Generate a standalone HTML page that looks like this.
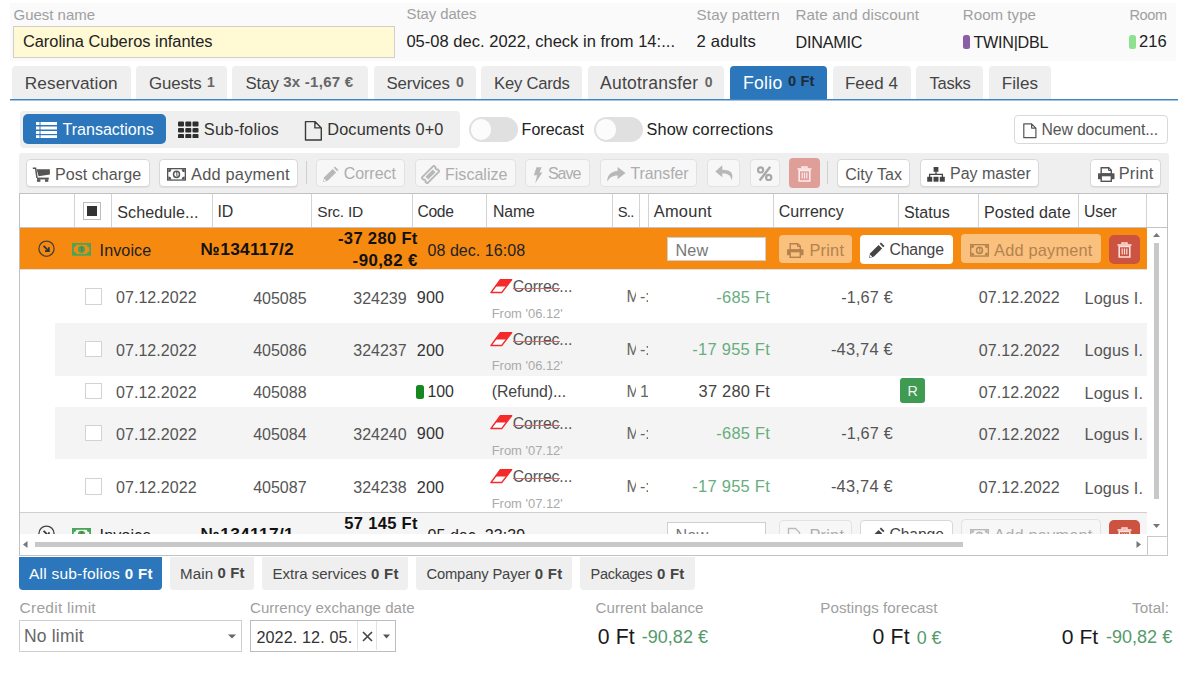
<!DOCTYPE html>
<html><head><meta charset="utf-8"><style>
html,body{margin:0;padding:0;background:#fff;width:1189px;height:673px;overflow:hidden;position:relative;font-family:"Liberation Sans",sans-serif;}
.a{position:absolute;box-sizing:border-box;}
.t{white-space:pre;}
</style></head><body>
<div class="a" style="left:10px;top:3px;width:1166.00px;height:58.00px;background:#fafafa;"></div>
<div class="a t" style="top:4.81px;font-size:14.97px;line-height:19px;color:#a0a0a0;letter-spacing:-0.015px;left:13.60px;">Guest name</div>
<div class="a t" style="top:5.33px;font-size:14.90px;line-height:19px;color:#a0a0a0;letter-spacing:-0.054px;left:406.50px;">Stay dates</div>
<div class="a t" style="top:5.23px;font-size:15.21px;line-height:19px;color:#a0a0a0;letter-spacing:0.102px;left:696.60px;">Stay pattern</div>
<div class="a t" style="top:5.24px;font-size:15.16px;line-height:19px;color:#a0a0a0;letter-spacing:0.081px;left:795.50px;">Rate and discount</div>
<div class="a t" style="top:5.27px;font-size:15.07px;line-height:19px;color:#a0a0a0;letter-spacing:0.042px;left:962.80px;">Room type</div>
<div class="a t" style="top:5.95px;font-size:14.56px;line-height:18px;color:#a0a0a0;letter-spacing:-0.392px;left:1129.50px;">Room</div>
<div class="a" style="left:13px;top:26px;width:381.50px;height:31.70px;background:#fffad4;border:1px solid #cfcfcf;"></div>
<div class="a t" style="top:31.29px;font-size:16.46px;line-height:21px;color:#222;letter-spacing:-0.018px;left:22.90px;">Carolina Cuberos infantes</div>
<div class="a t" style="top:31.47px;font-size:16.53px;line-height:21px;color:#222;letter-spacing:0.014px;left:406.40px;">05-08 dec. 2022, check in from 14:...</div>
<div class="a t" style="top:31.40px;font-size:16.72px;line-height:21px;color:#222;letter-spacing:0.112px;left:696.60px;">2 adults</div>
<div class="a t" style="top:32.09px;font-size:16.16px;line-height:20px;color:#222;letter-spacing:-0.236px;left:795.60px;">DINAMIC</div>
<div class="a" style="left:962.6px;top:34.5px;width:7.40px;height:14.30px;background:#8b5fa8;border-radius:2.5px;"></div>
<div class="a t" style="top:32.11px;font-size:16.13px;line-height:20px;color:#222;letter-spacing:-0.253px;left:973.50px;">TWIN|DBL</div>
<div class="a" style="left:1129px;top:34.5px;width:7.00px;height:14.30px;background:#8fe08f;border-radius:2.5px;"></div>
<div class="a t" style="top:31.47px;font-size:16.51px;line-height:21px;color:#222;letter-spacing:0.011px;left:1139.00px;">216</div>
<div class="a" style="left:12px;top:66px;width:119.00px;height:34.00px;background:#efefef;border-radius:4px 4px 0 0;"></div>
<div class="a t" style="top:72.03px;font-size:17.21px;line-height:22px;color:#444;letter-spacing:0.110px;left:24.80px;">Reservation</div>
<div class="a" style="left:136px;top:66px;width:91.00px;height:34.00px;background:#efefef;border-radius:4px 4px 0 0;"></div>
<div class="a t" style="top:72.66px;font-size:16.84px;line-height:21px;color:#444;letter-spacing:-0.099px;left:148.90px;">Guests</div>
<div class="a t" style="top:72.54px;font-size:14.00px;line-height:18px;color:#666;font-weight:700;left:207.00px;">1</div>
<div class="a" style="left:232px;top:66px;width:136.00px;height:34.00px;background:#efefef;border-radius:4px 4px 0 0;"></div>
<div class="a t" style="top:72.67px;font-size:16.83px;line-height:21px;color:#444;letter-spacing:-0.117px;left:245.50px;">Stay</div>
<div class="a t" style="top:71.69px;font-size:15.02px;line-height:19px;color:#666;font-weight:700;letter-spacing:0.260px;left:283.20px;">3x -1,67 €</div>
<div class="a" style="left:374px;top:66px;width:102.00px;height:34.00px;background:#efefef;border-radius:4px 4px 0 0;"></div>
<div class="a t" style="top:72.68px;font-size:16.78px;line-height:21px;color:#444;letter-spacing:-0.121px;left:386.50px;">Services</div>
<div class="a t" style="top:72.54px;font-size:14.00px;line-height:18px;color:#666;font-weight:700;left:456.00px;">0</div>
<div class="a" style="left:481px;top:66px;width:101.00px;height:34.00px;background:#efefef;border-radius:4px 4px 0 0;"></div>
<div class="a t" style="top:72.73px;font-size:16.64px;line-height:21px;color:#444;letter-spacing:-0.212px;left:494.00px;">Key Cards</div>
<div class="a" style="left:588px;top:66px;width:136.00px;height:34.00px;background:#efefef;border-radius:4px 4px 0 0;"></div>
<div class="a t" style="top:71.93px;font-size:17.50px;line-height:22px;color:#444;letter-spacing:0.247px;left:600.00px;">Autotransfer</div>
<div class="a t" style="top:72.54px;font-size:14.00px;line-height:18px;color:#666;font-weight:700;left:704.70px;">0</div>
<div class="a" style="left:730px;top:66px;width:97.00px;height:34.00px;background:#2c77bb;border-radius:4px 4px 0 0;"></div>
<div class="a t" style="top:71.90px;font-size:17.58px;line-height:22px;color:#fff;letter-spacing:0.314px;left:742.90px;">Folio</div>
<div class="a t" style="top:72.31px;font-size:14.67px;line-height:18px;color:#1d2b3a;font-weight:700;letter-spacing:0.098px;left:788.00px;">0 Ft</div>
<div class="a" style="left:833px;top:66px;width:78.00px;height:34.00px;background:#efefef;border-radius:4px 4px 0 0;"></div>
<div class="a t" style="top:72.61px;font-size:16.99px;line-height:21px;color:#444;left:845.00px;">Feed 4</div>
<div class="a" style="left:916px;top:66px;width:67.00px;height:34.00px;background:#efefef;border-radius:4px 4px 0 0;"></div>
<div class="a t" style="top:72.76px;font-size:16.56px;line-height:21px;color:#444;letter-spacing:-0.279px;left:929.60px;">Tasks</div>
<div class="a" style="left:989px;top:66px;width:62.00px;height:34.00px;background:#efefef;border-radius:4px 4px 0 0;"></div>
<div class="a t" style="top:72.57px;font-size:17.10px;line-height:21px;color:#444;letter-spacing:0.054px;left:1001.70px;">Files</div>
<div class="a" style="left:10px;top:99px;width:1167.50px;height:1.00px;background:#3f84c3;"></div>
<div class="a" style="left:10px;top:100px;width:1167.50px;height:1.00px;background:#a4c4e4;"></div>
<div class="a" style="left:20px;top:110.5px;width:440.00px;height:37.00px;background:#efefef;border-radius:4px;"></div>
<div class="a" style="left:23.4px;top:114.3px;width:142.60px;height:29.90px;background:#2c77bb;border-radius:5px;"></div>
<svg class="a" style="left:36px;top:121px;" width="21" height="17" viewBox="0 0 21 17"><rect x="0" y="1" width="3.5" height="3" fill="#fff"/><rect x="4.5" y="1" width="16.5" height="3" fill="#fff"/><rect x="0" y="5.5" width="3.5" height="3" fill="#fff"/><rect x="4.5" y="5.5" width="16.5" height="3" fill="#fff"/><rect x="0" y="10" width="3.5" height="3" fill="#fff"/><rect x="4.5" y="10" width="16.5" height="3" fill="#fff"/><rect x="0" y="14.2" width="3.5" height="3" fill="#fff"/><rect x="4.5" y="14.2" width="16.5" height="3" fill="#fff"/></svg>
<div class="a t" style="top:119.44px;font-size:16.02px;line-height:20px;color:#fff;letter-spacing:0.012px;left:62.50px;">Transactions</div>
<svg class="a" style="left:178px;top:121px;" width="21" height="17" viewBox="0 0 21 17"><rect x="0" y="0.6" width="6" height="5" rx="1" fill="#2e2e2e"/><rect x="0" y="6.9" width="6" height="4.6" rx="1" fill="#2e2e2e"/><rect x="0" y="12.9" width="6" height="4.6" rx="1" fill="#2e2e2e"/><rect x="7.3" y="0.6" width="6" height="5" rx="1" fill="#2e2e2e"/><rect x="7.3" y="6.9" width="6" height="4.6" rx="1" fill="#2e2e2e"/><rect x="7.3" y="12.9" width="6" height="4.6" rx="1" fill="#2e2e2e"/><rect x="14.5" y="0.6" width="6" height="5" rx="1" fill="#2e2e2e"/><rect x="14.5" y="6.9" width="6" height="4.6" rx="1" fill="#2e2e2e"/><rect x="14.5" y="12.9" width="6" height="4.6" rx="1" fill="#2e2e2e"/></svg>
<div class="a t" style="top:118.80px;font-size:16.43px;line-height:21px;color:#333;letter-spacing:0.210px;left:203.80px;">Sub-folios</div>
<svg class="a" style="left:304px;top:119.6px;" width="19" height="22" viewBox="0 0 19 22"><path d="M1.5 1.6 H10.9 L17.3 8 V20 H1.5 Z M10.9 1.6 V7.9 H17.3" fill="none" stroke="#3a3a3a" stroke-width="1.4" stroke-linejoin="round"/></svg>
<div class="a t" style="top:119.36px;font-size:16.26px;line-height:20px;color:#333;letter-spacing:0.151px;left:327.30px;">Documents 0+0</div>
<div class="a" style="left:468.6px;top:116.8px;width:49.40px;height:25.20px;background:#e0e0e0;border-radius:12.6px;"></div>
<div class="a" style="left:470.5px;top:119.2px;width:20.50px;height:20.50px;background:#fcfcfc;border-radius:10.3px;"></div>
<div class="a" style="left:594px;top:116.8px;width:49.40px;height:25.20px;background:#e0e0e0;border-radius:12.6px;"></div>
<div class="a" style="left:595.9px;top:119.2px;width:20.50px;height:20.50px;background:#fcfcfc;border-radius:10.3px;"></div>
<div class="a t" style="top:119.44px;font-size:16.02px;line-height:20px;color:#222;letter-spacing:0.011px;left:521.60px;">Forecast</div>
<div class="a t" style="top:119.36px;font-size:16.25px;line-height:20px;color:#222;letter-spacing:0.129px;left:646.50px;">Show corrections</div>
<div class="a" style="left:1014.4px;top:115.2px;width:153.60px;height:28.50px;background:#fff;border:1px solid #d9d9d9;border-radius:4px;"></div>
<svg class="a" style="left:1023px;top:122.6px;" width="14" height="16" viewBox="0 0 14 16"><path d="M0.8 0.8 H8.6 L12.9 5.1 V14.7 H0.8 Z M8.6 0.8 V5.1 H12.9" fill="none" stroke="#555" stroke-width="1.2" stroke-linejoin="round"/></svg>
<div class="a t" style="top:120.13px;font-size:15.78px;line-height:20px;color:#555;letter-spacing:-0.117px;left:1041.50px;">New document...</div>
<div class="a" style="left:18.5px;top:152.6px;width:1150.00px;height:40.40px;background:#efefef;border-radius:3px 3px 0 0;"></div>
<div class="a" style="left:25.6px;top:158.8px;width:124.40px;height:28.60px;background:#fff;border:1px solid #d8d8d8;border-radius:4px;box-shadow:0 1px 0 rgba(0,0,0,0.06);"></div>
<div class="a" style="left:159.4px;top:158.8px;width:138.30px;height:28.60px;background:#fff;border:1px solid #d8d8d8;border-radius:4px;box-shadow:0 1px 0 rgba(0,0,0,0.06);"></div>
<svg class="a" style="left:32px;top:167px;" width="19" height="16" viewBox="0 0 19 16"><path d="M0.8 1.2 H3.6 L5 11" fill="none" stroke="#555" stroke-width="1.5"/><path d="M4.6 2.3 H17.9 V7.6 L6.6 9.2 Z" fill="#555"/><rect x="5" y="10.6" width="11.8" height="1.8" fill="#555"/><rect x="5" y="12.2" width="3.4" height="2.6" fill="#555"/><rect x="13" y="12.2" width="3.3" height="2.6" fill="#555"/></svg>
<div class="a t" style="top:163.82px;font-size:16.09px;line-height:20px;color:#555;letter-spacing:0.047px;left:54.90px;">Post charge</div>
<svg class="a" style="left:167px;top:167.9px;" width="19" height="13" viewBox="0 0 19 13"><rect x="0" y="0" width="19" height="12.7" fill="#555"/><rect x="1.3" y="1.3" width="16.4" height="10.1" fill="#fff"/><path d="M1.3 1.3 h3 a3 3 0 0 1 -3 3 Z M17.7 1.3 v3 a3 3 0 0 1 -3 -3 Z M1.3 11.4 v-3 a3 3 0 0 1 3 3 Z M17.7 11.4 h-3 a3 3 0 0 1 3 -3 Z" fill="#555"/><ellipse cx="9.5" cy="6.35" rx="3" ry="3.2" fill="none" stroke="#555" stroke-width="1.5"/><path d="M9 4.6 L9.9 4.2 V8.3" fill="none" stroke="#555" stroke-width="1"/></svg>
<div class="a t" style="top:163.73px;font-size:16.36px;line-height:20px;color:#555;letter-spacing:0.214px;left:191.00px;">Add payment</div>
<div class="a" style="left:305.5px;top:160.6px;width:1.00px;height:23.90px;background:#d0d0d0;"></div>
<div class="a" style="left:315.7px;top:158.8px;width:89.10px;height:28.60px;background:#f7f7f7;border:1px solid #e2e2e2;border-radius:4px;"></div>
<svg class="a" style="left:322px;top:166px;" width="17" height="17" viewBox="0 0 17 17"><path d="M1 16 L2.2 11.3 L10.6 2.9 L14.1 6.4 L5.7 14.8 Z" fill="#b8b8b8"/><path d="M11.7 1.8 L13 0.5 L16.5 4 L15.2 5.3 Z" fill="#b8b8b8"/><path d="M1.6 15.4 L2.3 12.8 L4.2 14.7 Z" fill="#f7f7f7"/></svg>
<div class="a t" style="top:163.86px;font-size:15.97px;line-height:20px;color:#adadad;letter-spacing:-0.015px;left:343.70px;">Correct</div>
<div class="a" style="left:414.9px;top:158.8px;width:100.90px;height:28.60px;background:#f7f7f7;border:1px solid #e2e2e2;border-radius:4px;"></div>
<svg class="a" style="left:421px;top:165px;" width="19" height="19" viewBox="0 0 19 19"><g transform="rotate(-45 9.5 9.5)"><path d="M0.8 5.5 H18.2 V8 A1.6 1.6 0 0 0 18.2 11 V13.5 H0.8 V11 A1.6 1.6 0 0 0 0.8 8 Z" fill="none" stroke="#b8b8b8" stroke-width="1.8"/><rect x="4.3" y="7.6" width="10.4" height="3.8" fill="#b8b8b8"/></g></svg>
<div class="a t" style="top:163.84px;font-size:16.03px;line-height:20px;color:#adadad;letter-spacing:0.016px;left:445.00px;">Fiscalize</div>
<div class="a" style="left:525.4px;top:158.8px;width:64.30px;height:28.60px;background:#f7f7f7;border:1px solid #e2e2e2;border-radius:4px;"></div>
<svg class="a" style="left:533px;top:167px;" width="10" height="17" viewBox="0 0 10 17"><path d="M3.5 0.2 H8.6 L6.6 5.6 H9.4 L2.2 16.2 L4.1 8.2 H0.8 Z" fill="#b8b8b8"/></svg>
<div class="a t" style="top:163.85px;font-size:16.00px;line-height:20px;color:#adadad;letter-spacing:-0.993px;left:547.90px;">Save</div>
<div class="a" style="left:599.8px;top:158.8px;width:97.60px;height:28.60px;background:#f7f7f7;border:1px solid #e2e2e2;border-radius:4px;"></div>
<svg class="a" style="left:606.5px;top:166.5px;" width="19" height="15" viewBox="0 0 19 15"><path d="M0.3 14.8 C0 8.2 3.8 4.3 10.6 3.9 V0 L18.5 6.1 L10.6 12.2 V8.5 C5.6 8.5 2.4 10.6 0.3 14.8 Z" fill="#b8b8b8"/></svg>
<div class="a t" style="top:163.90px;font-size:15.87px;line-height:20px;color:#adadad;letter-spacing:-0.069px;left:630.60px;">Transfer</div>
<div class="a" style="left:707px;top:158.8px;width:33.30px;height:28.60px;background:#f7f7f7;border:1px solid #e2e2e2;border-radius:4px;"></div>
<svg class="a" style="left:714.5px;top:165px;" width="19" height="16" viewBox="0 0 19 16"><path d="M7.3 0.3 L0.3 6.5 L7.3 12.3 V8.6 C12.5 8.6 16 10 16.5 15.6 C18.8 9.5 17 4.8 7.3 4.8 Z" fill="#b8b8b8"/></svg>
<div class="a" style="left:749.7px;top:158.8px;width:30.30px;height:28.60px;background:#f7f7f7;border:1px solid #e2e2e2;border-radius:4px;"></div>
<svg class="a" style="left:757px;top:165.5px;" width="16" height="16" viewBox="0 0 16 16"><circle cx="3.6" cy="3.9" r="2.6" fill="none" stroke="#a8a8a8" stroke-width="2.2"/><circle cx="11.7" cy="11.4" r="2.6" fill="none" stroke="#a8a8a8" stroke-width="2.2"/><path d="M13.2 0.8 L2.6 14.6" stroke="#a8a8a8" stroke-width="2.4"/></svg>
<div class="a" style="left:789px;top:158px;width:30.80px;height:29.80px;background:#df9e98;border-radius:4px;"></div>
<svg class="a" style="left:797px;top:165.5px;" width="15" height="16" viewBox="0 0 15 16"><path d="M0.5 3 H14.5" stroke="#fdeceb" stroke-width="1.6"/><path d="M5 2.5 V1 H10 V2.5" fill="none" stroke="#fdeceb" stroke-width="1.4"/><path d="M2.2 4.5 H12.8 V15 H2.2 Z" fill="none" stroke="#fdeceb" stroke-width="1.6"/><path d="M5.2 6.5 V12.5 M7.5 6.5 V12.5 M9.8 6.5 V12.5" stroke="#fdeceb" stroke-width="1.2"/></svg>
<div class="a" style="left:827.4px;top:160.6px;width:1.00px;height:23.90px;background:#d0d0d0;"></div>
<div class="a" style="left:837px;top:158.8px;width:72.80px;height:28.60px;background:#fff;border:1px solid #d8d8d8;border-radius:4px;box-shadow:0 1px 0 rgba(0,0,0,0.06);"></div>
<div class="a t" style="top:163.84px;font-size:16.02px;line-height:20px;color:#555;letter-spacing:0.011px;left:845.20px;">City Tax</div>
<div class="a" style="left:919.5px;top:158.8px;width:119.50px;height:28.60px;background:#fff;border:1px solid #d8d8d8;border-radius:4px;box-shadow:0 1px 0 rgba(0,0,0,0.06);"></div>
<svg class="a" style="left:927px;top:167px;" width="18" height="15" viewBox="0 0 18 15"><rect x="6.6" y="0" width="4.8" height="4.8" fill="#444"/><path d="M9 4.8 V7.4 M2.6 10 V7.4 H15.4 V10" fill="none" stroke="#444" stroke-width="1.3"/><rect x="0.2" y="9.8" width="5" height="4.9" fill="#444"/><rect x="6.5" y="9.8" width="5" height="4.9" fill="#444"/><rect x="12.8" y="9.8" width="5" height="4.9" fill="#444"/></svg>
<div class="a t" style="top:163.86px;font-size:15.98px;line-height:20px;color:#555;left:950.00px;">Pay master</div>
<div class="a" style="left:1089.7px;top:158.8px;width:71.30px;height:28.60px;background:#fff;border:1px solid #d8d8d8;border-radius:4px;box-shadow:0 1px 0 rgba(0,0,0,0.06);"></div>
<svg class="a" style="left:1097.5px;top:166.8px;" width="17" height="15" viewBox="0 0 17 15"><path d="M3.2 0.7 H10.8 L13.3 3.2 V7 H3.2 Z" fill="none" stroke="#555" stroke-width="1.4"/><path d="M10.5 0.7 V3.5 H13.3" fill="none" stroke="#555" stroke-width="1"/><rect x="0" y="6.3" width="16.5" height="5.9" rx="0.6" fill="#555"/><rect x="3.2" y="8.6" width="10.1" height="5.7" fill="#fff" stroke="#555" stroke-width="1.4"/></svg>
<div class="a t" style="top:163.21px;font-size:16.42px;line-height:21px;color:#555;letter-spacing:0.215px;left:1118.70px;">Print</div>
<div class="a" style="left:19px;top:193px;width:1149.00px;height:363.00px;border:1px solid #c2c2c2;"></div>
<div class="a" style="left:20px;top:194px;width:1147.00px;height:33.00px;background:#fff;"></div>
<div class="a" style="left:20px;top:227px;width:1147.00px;height:1.00px;background:#c3c3c3;"></div>
<div class="a" style="left:73.5px;top:194px;width:1.00px;height:33.00px;background:#d3d3d3;"></div>
<div class="a" style="left:110.5px;top:194px;width:1.00px;height:33.00px;background:#d3d3d3;"></div>
<div class="a" style="left:211.5px;top:194px;width:1.00px;height:33.00px;background:#d3d3d3;"></div>
<div class="a" style="left:310.5px;top:194px;width:1.00px;height:33.00px;background:#d3d3d3;"></div>
<div class="a" style="left:411.5px;top:194px;width:1.00px;height:33.00px;background:#d3d3d3;"></div>
<div class="a" style="left:485.5px;top:194px;width:1.00px;height:33.00px;background:#d3d3d3;"></div>
<div class="a" style="left:611.5px;top:194px;width:1.00px;height:33.00px;background:#d3d3d3;"></div>
<div class="a" style="left:638.5px;top:194px;width:1.00px;height:33.00px;background:#d3d3d3;"></div>
<div class="a" style="left:647.5px;top:194px;width:1.00px;height:33.00px;background:#d3d3d3;"></div>
<div class="a" style="left:772.5px;top:194px;width:1.00px;height:33.00px;background:#d3d3d3;"></div>
<div class="a" style="left:897.5px;top:194px;width:1.00px;height:33.00px;background:#d3d3d3;"></div>
<div class="a" style="left:977.5px;top:194px;width:1.00px;height:33.00px;background:#d3d3d3;"></div>
<div class="a" style="left:1077.5px;top:194px;width:1.00px;height:33.00px;background:#d3d3d3;"></div>
<div class="a" style="left:1145.5px;top:194px;width:1.00px;height:33.00px;background:#d3d3d3;"></div>
<div class="a" style="left:83px;top:202px;width:18.00px;height:18.00px;background:#fff;border:1px solid #bdbdbd;"></div>
<div class="a" style="left:87px;top:206px;width:10.00px;height:10.00px;background:#333;"></div>
<div class="a t" style="top:201.70px;font-size:16.14px;line-height:20px;color:#333;letter-spacing:0.071px;left:117.20px;">Schedule...</div>
<div class="a t" style="top:201.77px;font-size:15.95px;line-height:20px;color:#333;letter-spacing:-0.050px;left:217.40px;">ID</div>
<div class="a t" style="top:202.42px;font-size:15.51px;line-height:19px;color:#333;letter-spacing:-0.248px;left:317.30px;">Src. ID</div>
<div class="a t" style="top:201.87px;font-size:15.66px;line-height:20px;color:#333;letter-spacing:-0.273px;left:417.40px;">Code</div>
<div class="a t" style="top:201.81px;font-size:15.83px;line-height:20px;color:#333;letter-spacing:-0.153px;left:493.00px;">Name</div>
<div class="a t" style="top:203.19px;font-size:14.73px;line-height:18px;color:#333;letter-spacing:-0.775px;left:617.80px;">S..</div>
<div class="a t" style="top:201.11px;font-size:16.42px;line-height:21px;color:#333;letter-spacing:0.288px;left:653.70px;">Amount</div>
<div class="a t" style="top:201.75px;font-size:16.00px;line-height:20px;color:#333;left:778.80px;">Currency</div>
<div class="a t" style="top:201.73px;font-size:16.06px;line-height:20px;color:#333;letter-spacing:0.034px;left:904.00px;">Status</div>
<div class="a t" style="top:201.71px;font-size:16.12px;line-height:20px;color:#333;letter-spacing:0.063px;left:984.00px;">Posted date</div>
<div class="a t" style="top:201.83px;font-size:15.77px;line-height:20px;color:#333;letter-spacing:-0.160px;left:1084.00px;">User</div>
<div class="a" style="left:20px;top:228px;width:1126.50px;height:41.00px;background:#f68a10;"></div>
<svg class="a" style="left:38px;top:240px;" width="18" height="18" viewBox="0 0 18 18"><circle cx="8.5" cy="8.7" r="7.6" fill="none" stroke="#4b4038" stroke-width="1.3"/><path d="M5.6 5.8 L10.6 10.8 M10.9 7.2 V11.1 H7" fill="none" stroke="#2e3340" stroke-width="1.7"/></svg>
<svg class="a" style="left:72.3px;top:243.2px;" width="19" height="13" viewBox="0 0 19 13"><rect x="0" y="0" width="19" height="12.7" fill="#47a55a"/><rect x="1.8" y="1.8" width="15.4" height="9.1" fill="#f68a10"/><path d="M1.3 1.3 h3 a3 3 0 0 1 -3 3 Z M17.7 1.3 v3 a3 3 0 0 1 -3 -3 Z M1.3 11.4 v-3 a3 3 0 0 1 3 3 Z M17.7 11.4 h-3 a3 3 0 0 1 3 -3 Z" fill="#47a55a"/><ellipse cx="9.5" cy="6.35" rx="3.6" ry="3.6" fill="#47a55a"/><path d="M8.8 4.7 L9.9 4.2 V8.5" fill="none" stroke="#7a6a20" stroke-width="1.1"/></svg>
<div class="a t" style="top:240.10px;font-size:16.15px;line-height:20px;color:#1e1e1e;letter-spacing:0.082px;left:99.60px;">Invoice</div>
<div class="a t" style="top:238.37px;font-size:17.40px;line-height:22px;color:#111;font-weight:700;letter-spacing:0.262px;left:200.60px;">№134117/2</div>
<div class="a t" style="top:228.04px;font-size:16.60px;line-height:21px;color:#111;font-weight:700;letter-spacing:0.309px;right:771.32px;">-37 280 Ft</div>
<div class="a t" style="top:249.66px;font-size:16.83px;line-height:21px;color:#111;font-weight:700;letter-spacing:0.434px;right:771.17px;">-90,82 €</div>
<div class="a t" style="top:240.13px;font-size:16.06px;line-height:20px;color:#222;letter-spacing:0.031px;left:427.50px;">08 dec. 16:08</div>
<div class="a" style="left:666.5px;top:237.2px;width:99.50px;height:24.00px;background:#fff;border:1px solid #cfcfcf;"></div>
<div class="a t" style="top:239.89px;font-size:16.18px;line-height:20px;color:#777;letter-spacing:0.180px;left:675.40px;">New</div>
<div class="a" style="left:779.3px;top:234.7px;width:72.70px;height:28.80px;background:#f9c07e;border-radius:4px;"></div>
<svg class="a" style="left:786.8px;top:243.2px;" width="17" height="15" viewBox="0 0 17 15"><path d="M3.2 0.7 H10.8 L13.3 3.2 V7 H3.2 Z" fill="none" stroke="#b5824f" stroke-width="1.4"/><path d="M10.5 0.7 V3.5 H13.3" fill="none" stroke="#b5824f" stroke-width="1"/><rect x="0" y="6.3" width="16.5" height="5.9" rx="0.6" fill="#b5824f"/><rect x="3.2" y="8.6" width="10.1" height="5.7" fill="#f9c07e" stroke="#b5824f" stroke-width="1.4"/></svg>
<div class="a t" style="top:239.71px;font-size:16.39px;line-height:20px;color:#b5824f;letter-spacing:0.202px;left:809.50px;">Print</div>
<div class="a" style="left:860.3px;top:235px;width:92.70px;height:28.50px;background:#fff;border-radius:4px;"></div>
<svg class="a" style="left:868px;top:242px;" width="17" height="17" viewBox="0 0 17 17"><path d="M1 16 L2.2 11.3 L10.6 2.9 L14.1 6.4 L5.7 14.8 Z" fill="#444"/><path d="M11.7 1.8 L13 0.5 L16.5 4 L15.2 5.3 Z" fill="#444"/><path d="M1.6 15.4 L2.3 12.8 L4.2 14.7 Z" fill="#fff"/></svg>
<div class="a t" style="top:239.92px;font-size:15.80px;line-height:20px;color:#444;letter-spacing:-0.138px;left:889.40px;">Change</div>
<div class="a" style="left:961.4px;top:234.4px;width:139.30px;height:29.10px;background:#f9c07e;border-radius:4px;"></div>
<svg class="a" style="left:969.7px;top:244px;" width="19" height="13" viewBox="0 0 19 13"><rect x="0" y="0" width="19" height="12.7" fill="#b5824f"/><rect x="1.3" y="1.3" width="16.4" height="10.1" fill="#f9c07e"/><path d="M1.3 1.3 h3 a3 3 0 0 1 -3 3 Z M17.7 1.3 v3 a3 3 0 0 1 -3 -3 Z M1.3 11.4 v-3 a3 3 0 0 1 3 3 Z M17.7 11.4 h-3 a3 3 0 0 1 3 -3 Z" fill="#b5824f"/><ellipse cx="9.5" cy="6.35" rx="3" ry="3.2" fill="none" stroke="#b5824f" stroke-width="1.5"/><path d="M9 4.6 L9.9 4.2 V8.3" fill="none" stroke="#b5824f" stroke-width="1"/></svg>
<div class="a t" style="top:239.73px;font-size:16.34px;line-height:20px;color:#b5824f;letter-spacing:0.199px;left:994.10px;">Add payment</div>
<div class="a" style="left:1109.2px;top:234.5px;width:30.50px;height:29.30px;background:#cd5341;border-radius:5px;"></div>
<svg class="a" style="left:1117px;top:242px;" width="15" height="16" viewBox="0 0 15 16"><path d="M0.5 3 H14.5" stroke="#fbe0dc" stroke-width="1.6"/><path d="M5 2.5 V1 H10 V2.5" fill="none" stroke="#fbe0dc" stroke-width="1.4"/><path d="M2.2 4.5 H12.8 V15 H2.2 Z" fill="none" stroke="#fbe0dc" stroke-width="1.6"/><path d="M5.2 6.5 V12.5 M7.5 6.5 V12.5 M9.8 6.5 V12.5" stroke="#fbe0dc" stroke-width="1.2"/></svg>
<div class="a" style="left:20px;top:269px;width:1126.50px;height:1.00px;background:#e0e0e4;"></div>
<div class="a" style="left:85px;top:288.2px;width:16.60px;height:16.60px;background:#fff;border:1px solid #d3d3d3;"></div>
<div class="a t" style="top:287.23px;font-size:16.06px;line-height:20px;color:#555;letter-spacing:0.034px;left:116.00px;">07.12.2022</div>
<div class="a t" style="top:288.65px;font-size:16.00px;line-height:20px;color:#555;right:882.47px;">405085</div>
<div class="a t" style="top:288.65px;font-size:16.00px;line-height:20px;color:#555;right:782.37px;">324239</div>
<div class="a t" style="top:287.19px;font-size:16.17px;line-height:20px;color:#333;letter-spacing:0.145px;left:416.80px;">900</div>
<svg class="a" style="left:490.3px;top:278.9px;" width="23" height="15" viewBox="0 0 23 15"><path d="M0.9 13.6 L10.4 0.7 L21.6 0.7 L11.7 13.6 Z" fill="#fff" stroke="#f52a2a" stroke-width="1.5" stroke-linejoin="round"/><path d="M10.4 0.7 L21.6 0.7 L16.3 7.6 L5.2 7.6 Z" fill="#f52a2a"/></svg>
<div class="a t" style="top:277.23px;font-size:15.78px;line-height:20px;color:#555;letter-spacing:-0.104px;left:512.70px;">Correc...</div>
<div class="a" style="left:512.5px;top:288.09999999999997px;width:47.50px;height:1.00px;background:#cc6a6a;"></div>
<div class="a t" style="top:306.30px;font-size:12.97px;line-height:16px;color:#aaa;letter-spacing:-0.015px;left:491.70px;">From '06.12'</div>
<div class="a" style="left:626px;top:269.2px;width:10px;height:53.80px;overflow:hidden"><div class="a t" style="left:0.5px;top:18.05px;font-size:16px;line-height:20px;color:#666">M</div></div>
<div class="a" style="left:639.5px;top:269.2px;width:8.6px;height:53.80px;overflow:hidden"><div class="a t" style="left:0.5px;top:18.05px;font-size:16px;line-height:20px;color:#666">-:</div></div>
<div class="a t" style="top:286.60px;font-size:16.44px;line-height:21px;color:#68ad7e;letter-spacing:0.232px;left:716.30px;">-685 Ft</div>
<div class="a t" style="top:287.15px;font-size:16.28px;line-height:20px;color:#555;letter-spacing:0.147px;left:841.20px;">-1,67 €</div>
<div class="a t" style="top:287.22px;font-size:16.09px;line-height:20px;color:#555;letter-spacing:0.051px;left:978.70px;">07.12.2022</div>
<div class="a t" style="top:287.98px;font-size:16.20px;line-height:20px;color:#555;letter-spacing:0.103px;left:1084.60px;">Logus I.</div>
<div class="a" style="left:55px;top:323px;width:1091.50px;height:52.50px;background:#f4f4f4;"></div>
<div class="a" style="left:85px;top:340.7px;width:16.60px;height:16.60px;background:#fff;border:1px solid #d3d3d3;"></div>
<div class="a t" style="top:339.73px;font-size:16.06px;line-height:20px;color:#555;letter-spacing:0.034px;left:116.00px;">07.12.2022</div>
<div class="a t" style="top:341.15px;font-size:16.00px;line-height:20px;color:#555;right:882.47px;">405086</div>
<div class="a t" style="top:341.15px;font-size:16.00px;line-height:20px;color:#555;right:782.37px;">324237</div>
<div class="a t" style="top:339.69px;font-size:16.17px;line-height:20px;color:#333;letter-spacing:0.145px;left:416.80px;">200</div>
<svg class="a" style="left:490.3px;top:331.8px;" width="23" height="15" viewBox="0 0 23 15"><path d="M0.9 13.6 L10.4 0.7 L21.6 0.7 L11.7 13.6 Z" fill="#fff" stroke="#f52a2a" stroke-width="1.5" stroke-linejoin="round"/><path d="M10.4 0.7 L21.6 0.7 L16.3 7.6 L5.2 7.6 Z" fill="#f52a2a"/></svg>
<div class="a t" style="top:330.13px;font-size:15.78px;line-height:20px;color:#555;letter-spacing:-0.104px;left:512.70px;">Correc...</div>
<div class="a" style="left:512.5px;top:341.0px;width:47.50px;height:1.00px;background:#cc6a6a;"></div>
<div class="a t" style="top:358.30px;font-size:12.97px;line-height:16px;color:#aaa;letter-spacing:-0.015px;left:491.70px;">From '06.12'</div>
<div class="a" style="left:626px;top:323px;width:10px;height:52.50px;overflow:hidden"><div class="a t" style="left:0.5px;top:16.75px;font-size:16px;line-height:20px;color:#666">M</div></div>
<div class="a" style="left:639.5px;top:323px;width:8.6px;height:52.50px;overflow:hidden"><div class="a t" style="left:0.5px;top:16.75px;font-size:16px;line-height:20px;color:#666">-:</div></div>
<div class="a t" style="top:339.08px;font-size:16.50px;line-height:21px;color:#68ad7e;letter-spacing:0.252px;left:692.30px;">-17 955 Ft</div>
<div class="a t" style="top:339.10px;font-size:16.43px;line-height:21px;color:#555;letter-spacing:0.227px;left:830.90px;">-43,74 €</div>
<div class="a t" style="top:339.72px;font-size:16.09px;line-height:20px;color:#555;letter-spacing:0.051px;left:978.70px;">07.12.2022</div>
<div class="a t" style="top:340.48px;font-size:16.20px;line-height:20px;color:#555;letter-spacing:0.103px;left:1084.60px;">Logus I.</div>
<div class="a" style="left:85px;top:382.79999999999995px;width:16.60px;height:16.60px;background:#fff;border:1px solid #d3d3d3;"></div>
<div class="a t" style="top:381.83px;font-size:16.06px;line-height:20px;color:#555;letter-spacing:0.034px;left:116.00px;">07.12.2022</div>
<div class="a t" style="top:383.25px;font-size:16.00px;line-height:20px;color:#555;right:882.47px;">405088</div>
<div class="a" style="left:416px;top:384.8px;width:7.50px;height:13.90px;background:#17871f;border-radius:2.5px;"></div>
<div class="a t" style="top:381.87px;font-size:15.93px;line-height:20px;color:#333;letter-spacing:-0.055px;left:427.50px;">100</div>
<div class="a t" style="top:381.89px;font-size:15.88px;line-height:20px;color:#444;letter-spacing:-0.055px;left:491.70px;">(Refund)...</div>
<div class="a" style="left:626px;top:375.5px;width:10px;height:31.40px;overflow:hidden"><div class="a t" style="left:0.5px;top:6.35px;font-size:16px;line-height:20px;color:#666">M</div></div>
<div class="a" style="left:639.5px;top:375.5px;width:8.6px;height:31.40px;overflow:hidden"><div class="a t" style="left:0.5px;top:6.35px;font-size:16px;line-height:20px;color:#666">1</div></div>
<div class="a t" style="top:381.20px;font-size:16.43px;line-height:21px;color:#444;letter-spacing:0.225px;left:698.60px;">37 280 Ft</div>
<div class="a" style="left:900px;top:378.1px;width:25.00px;height:24.70px;background:#3f9b52;border-radius:3px;"></div>
<div class="a t" style="top:382.14px;font-size:14.30px;line-height:18px;color:#f4f4f4;left:907.40px;">R</div>
<div class="a t" style="top:381.82px;font-size:16.09px;line-height:20px;color:#555;letter-spacing:0.051px;left:978.70px;">07.12.2022</div>
<div class="a t" style="top:382.58px;font-size:16.20px;line-height:20px;color:#555;letter-spacing:0.103px;left:1084.60px;">Logus I.</div>
<div class="a" style="left:55px;top:406.9px;width:1091.50px;height:52.40px;background:#f4f4f4;"></div>
<div class="a" style="left:85px;top:424.5px;width:16.60px;height:16.60px;background:#fff;border:1px solid #d3d3d3;"></div>
<div class="a t" style="top:423.53px;font-size:16.06px;line-height:20px;color:#555;letter-spacing:0.034px;left:116.00px;">07.12.2022</div>
<div class="a t" style="top:424.95px;font-size:16.00px;line-height:20px;color:#555;right:882.47px;">405084</div>
<div class="a t" style="top:424.95px;font-size:16.00px;line-height:20px;color:#555;right:782.37px;">324240</div>
<div class="a t" style="top:423.49px;font-size:16.17px;line-height:20px;color:#333;letter-spacing:0.145px;left:416.80px;">900</div>
<svg class="a" style="left:490.3px;top:415.3px;" width="23" height="15" viewBox="0 0 23 15"><path d="M0.9 13.6 L10.4 0.7 L21.6 0.7 L11.7 13.6 Z" fill="#fff" stroke="#f52a2a" stroke-width="1.5" stroke-linejoin="round"/><path d="M10.4 0.7 L21.6 0.7 L16.3 7.6 L5.2 7.6 Z" fill="#f52a2a"/></svg>
<div class="a t" style="top:413.63px;font-size:15.78px;line-height:20px;color:#555;letter-spacing:-0.104px;left:512.70px;">Correc...</div>
<div class="a" style="left:512.5px;top:424.5px;width:47.50px;height:1.00px;background:#cc6a6a;"></div>
<div class="a t" style="top:442.70px;font-size:12.97px;line-height:16px;color:#aaa;letter-spacing:-0.015px;left:491.70px;">From '07.12'</div>
<div class="a" style="left:626px;top:406.9px;width:10px;height:52.40px;overflow:hidden"><div class="a t" style="left:0.5px;top:16.65px;font-size:16px;line-height:20px;color:#666">M</div></div>
<div class="a" style="left:639.5px;top:406.9px;width:8.6px;height:52.40px;overflow:hidden"><div class="a t" style="left:0.5px;top:16.65px;font-size:16px;line-height:20px;color:#666">-:</div></div>
<div class="a t" style="top:422.90px;font-size:16.44px;line-height:21px;color:#68ad7e;letter-spacing:0.232px;left:716.30px;">-685 Ft</div>
<div class="a t" style="top:423.45px;font-size:16.28px;line-height:20px;color:#555;letter-spacing:0.147px;left:841.20px;">-1,67 €</div>
<div class="a t" style="top:423.52px;font-size:16.09px;line-height:20px;color:#555;letter-spacing:0.051px;left:978.70px;">07.12.2022</div>
<div class="a t" style="top:424.28px;font-size:16.20px;line-height:20px;color:#555;letter-spacing:0.103px;left:1084.60px;">Logus I.</div>
<div class="a" style="left:85px;top:478.0px;width:16.60px;height:16.60px;background:#fff;border:1px solid #d3d3d3;"></div>
<div class="a t" style="top:477.03px;font-size:16.06px;line-height:20px;color:#555;letter-spacing:0.034px;left:116.00px;">07.12.2022</div>
<div class="a t" style="top:478.45px;font-size:16.00px;line-height:20px;color:#555;right:882.47px;">405087</div>
<div class="a t" style="top:478.45px;font-size:16.00px;line-height:20px;color:#555;right:782.37px;">324238</div>
<div class="a t" style="top:476.99px;font-size:16.17px;line-height:20px;color:#333;letter-spacing:0.145px;left:416.80px;">200</div>
<svg class="a" style="left:490.3px;top:469.0px;" width="23" height="15" viewBox="0 0 23 15"><path d="M0.9 13.6 L10.4 0.7 L21.6 0.7 L11.7 13.6 Z" fill="#fff" stroke="#f52a2a" stroke-width="1.5" stroke-linejoin="round"/><path d="M10.4 0.7 L21.6 0.7 L16.3 7.6 L5.2 7.6 Z" fill="#f52a2a"/></svg>
<div class="a t" style="top:467.33px;font-size:15.78px;line-height:20px;color:#555;letter-spacing:-0.104px;left:512.70px;">Correc...</div>
<div class="a" style="left:512.5px;top:478.2px;width:47.50px;height:1.00px;background:#cc6a6a;"></div>
<div class="a t" style="top:496.10px;font-size:12.97px;line-height:16px;color:#aaa;letter-spacing:-0.015px;left:491.70px;">From '07.12'</div>
<div class="a" style="left:626px;top:459.3px;width:10px;height:52.70px;overflow:hidden"><div class="a t" style="left:0.5px;top:17.75px;font-size:16px;line-height:20px;color:#666">M</div></div>
<div class="a" style="left:639.5px;top:459.3px;width:8.6px;height:52.70px;overflow:hidden"><div class="a t" style="left:0.5px;top:17.75px;font-size:16px;line-height:20px;color:#666">-:</div></div>
<div class="a t" style="top:476.38px;font-size:16.50px;line-height:21px;color:#68ad7e;letter-spacing:0.252px;left:692.30px;">-17 955 Ft</div>
<div class="a t" style="top:476.40px;font-size:16.43px;line-height:21px;color:#555;letter-spacing:0.227px;left:830.90px;">-43,74 €</div>
<div class="a t" style="top:477.02px;font-size:16.09px;line-height:20px;color:#555;letter-spacing:0.051px;left:978.70px;">07.12.2022</div>
<div class="a t" style="top:477.78px;font-size:16.20px;line-height:20px;color:#555;letter-spacing:0.103px;left:1084.60px;">Logus I.</div>
<div class="a" style="left:20px;top:511.8px;width:1126.50px;height:1.20px;background:#cfcfcf;"></div>
<div class="a" style="left:0;top:513px;width:1146.5px;height:20.8px;overflow:hidden">
<div class="a" style="left:0;top:-228px;width:1189px;height:300px"><div class="a" style="left:20px;top:228px;width:1126.50px;height:41.00px;background:#f5f5f5;"></div>
<svg class="a" style="left:38px;top:240px;" width="18" height="18" viewBox="0 0 18 18"><circle cx="8.5" cy="8.7" r="7.6" fill="none" stroke="#4b4038" stroke-width="1.3"/><path d="M5.6 5.8 L10.6 10.8 M10.9 7.2 V11.1 H7" fill="none" stroke="#2e3340" stroke-width="1.7"/></svg>
<svg class="a" style="left:72.3px;top:243.2px;" width="19" height="13" viewBox="0 0 19 13"><rect x="0" y="0" width="19" height="12.7" fill="#47a55a"/><rect x="1.8" y="1.8" width="15.4" height="9.1" fill="#f5f5f5"/><path d="M1.3 1.3 h3 a3 3 0 0 1 -3 3 Z M17.7 1.3 v3 a3 3 0 0 1 -3 -3 Z M1.3 11.4 v-3 a3 3 0 0 1 3 3 Z M17.7 11.4 h-3 a3 3 0 0 1 3 -3 Z" fill="#47a55a"/><ellipse cx="9.5" cy="6.35" rx="3.6" ry="3.6" fill="#47a55a"/><path d="M8.8 4.7 L9.9 4.2 V8.5" fill="none" stroke="#7a6a20" stroke-width="1.1"/></svg>
<div class="a t" style="top:240.10px;font-size:16.15px;line-height:20px;color:#1e1e1e;letter-spacing:0.082px;left:99.60px;">Invoice</div>
<div class="a t" style="top:238.37px;font-size:17.40px;line-height:22px;color:#111;font-weight:700;letter-spacing:0.262px;left:200.60px;">№134117/1</div>
<div class="a t" style="top:228.06px;font-size:16.54px;line-height:21px;color:#111;font-weight:700;letter-spacing:0.289px;right:771.30px;">57 145 Ft</div>
<div class="a t" style="top:240.13px;font-size:16.06px;line-height:20px;color:#222;letter-spacing:0.031px;left:427.50px;">05 dec. 23:39</div>
<div class="a" style="left:666.5px;top:237.2px;width:99.50px;height:24.00px;background:#fff;border:1px solid #cfcfcf;"></div>
<div class="a t" style="top:239.89px;font-size:16.18px;line-height:20px;color:#777;letter-spacing:0.180px;left:675.40px;">New</div>
<div class="a" style="left:779.3px;top:234.7px;width:72.70px;height:28.80px;background:#f7f7f7;border:1px solid #e2e2e2;border-radius:4px;"></div>
<svg class="a" style="left:787px;top:242px;" width="14" height="17" viewBox="0 0 14 17"><path d="M1.5 1.5 H8.5 L12.5 5.5 V15.5 H1.5 Z" fill="none" stroke="#bbb" stroke-width="1.4"/></svg>
<div class="a t" style="top:239.71px;font-size:16.39px;line-height:20px;color:#adadad;letter-spacing:0.202px;left:809.50px;">Print</div>
<div class="a" style="left:860.3px;top:235px;width:92.70px;height:28.50px;background:#fff;border:1px solid #d8d8d8;border-radius:4px;"></div>
<svg class="a" style="left:868px;top:242px;" width="17" height="17" viewBox="0 0 17 17"><path d="M1 16 L2.2 11.3 L10.6 2.9 L14.1 6.4 L5.7 14.8 Z" fill="#444"/><path d="M11.7 1.8 L13 0.5 L16.5 4 L15.2 5.3 Z" fill="#444"/><path d="M1.6 15.4 L2.3 12.8 L4.2 14.7 Z" fill="#fff"/></svg>
<div class="a t" style="top:239.92px;font-size:15.80px;line-height:20px;color:#444;letter-spacing:-0.138px;left:889.40px;">Change</div>
<div class="a" style="left:961.4px;top:234.4px;width:139.30px;height:29.10px;background:#f7f7f7;border:1px solid #e2e2e2;border-radius:4px;"></div>
<svg class="a" style="left:969.7px;top:244px;" width="19" height="13" viewBox="0 0 19 13"><rect x="0" y="0" width="19" height="12.7" fill="#b8b8b8"/><rect x="1.3" y="1.3" width="16.4" height="10.1" fill="#f7f7f7"/><path d="M1.3 1.3 h3 a3 3 0 0 1 -3 3 Z M17.7 1.3 v3 a3 3 0 0 1 -3 -3 Z M1.3 11.4 v-3 a3 3 0 0 1 3 3 Z M17.7 11.4 h-3 a3 3 0 0 1 3 -3 Z" fill="#b8b8b8"/><ellipse cx="9.5" cy="6.35" rx="3" ry="3.2" fill="none" stroke="#b8b8b8" stroke-width="1.5"/><path d="M9 4.6 L9.9 4.2 V8.3" fill="none" stroke="#b8b8b8" stroke-width="1"/></svg>
<div class="a t" style="top:239.73px;font-size:16.34px;line-height:20px;color:#adadad;letter-spacing:0.199px;left:994.10px;">Add payment</div>
<div class="a" style="left:1109.2px;top:234.5px;width:30.50px;height:29.30px;background:#cd5341;border-radius:5px;"></div>
<svg class="a" style="left:1117px;top:242px;" width="15" height="16" viewBox="0 0 15 16"><path d="M0.5 3 H14.5" stroke="#fbe0dc" stroke-width="1.6"/><path d="M5 2.5 V1 H10 V2.5" fill="none" stroke="#fbe0dc" stroke-width="1.4"/><path d="M2.2 4.5 H12.8 V15 H2.2 Z" fill="none" stroke="#fbe0dc" stroke-width="1.6"/><path d="M5.2 6.5 V12.5 M7.5 6.5 V12.5 M9.8 6.5 V12.5" stroke="#fbe0dc" stroke-width="1.2"/></svg></div></div>
<div class="a" style="left:20px;top:533.8px;width:1126.50px;height:21.20px;background:#fff;"></div>
<div class="a" style="left:34.7px;top:541.8px;width:927.90px;height:5.10px;background:#c8c8c8;"></div>
<svg class="a" style="left:23px;top:541px;" width="5" height="7" viewBox="0 0 5 7"><path d="M4.5 0 V7 L0 3.5 Z" fill="#777"/></svg>
<svg class="a" style="left:1136px;top:541px;" width="5" height="7" viewBox="0 0 5 7"><path d="M0.5 0 V7 L5 3.5 Z" fill="#777"/></svg>
<div class="a" style="left:1146.5px;top:535.5px;width:21.50px;height:20.50px;background:#fff;border:1px solid #c9c9c9;"></div>
<div class="a" style="left:1146.5px;top:228px;width:20.50px;height:307.50px;background:#fff;"></div>
<div class="a" style="left:1153.9px;top:243px;width:4.70px;height:256.30px;background:#c8c8c8;"></div>
<svg class="a" style="left:1152.5px;top:233px;" width="7" height="4" viewBox="0 0 7 4"><path d="M0 4 H7 L3.5 0 Z" fill="#777"/></svg>
<svg class="a" style="left:1152.5px;top:524px;" width="7" height="4" viewBox="0 0 7 4"><path d="M0 0 H7 L3.5 4 Z" fill="#777"/></svg>
<div class="a" style="left:18.8px;top:557px;width:143.10px;height:33.40px;background:#2c77bb;border-radius:0 0 4px 4px;"></div>
<div class="a t" style="top:564.12px;font-size:15.51px;line-height:19px;color:#fff;letter-spacing:0.221px;left:29.00px;">All sub-folios</div>
<div class="a t" style="top:564.28px;font-size:15.06px;line-height:19px;color:#fff;font-weight:700;letter-spacing:0.332px;left:124.80px;">0 Ft</div>
<div class="a" style="left:170.2px;top:557px;width:84.10px;height:33.40px;background:#efefef;border-radius:0 0 4px 4px;"></div>
<div class="a t" style="top:564.26px;font-size:15.10px;line-height:19px;color:#444;letter-spacing:0.075px;left:180.10px;">Main</div>
<div class="a t" style="top:564.35px;font-size:14.86px;line-height:19px;color:#444;font-weight:700;letter-spacing:0.215px;left:217.50px;">0 Ft</div>
<div class="a" style="left:262.2px;top:557px;width:146.10px;height:33.40px;background:#efefef;border-radius:0 0 4px 4px;"></div>
<div class="a t" style="top:564.30px;font-size:14.98px;line-height:19px;color:#444;left:272.60px;">Extra services</div>
<div class="a t" style="top:564.32px;font-size:14.95px;line-height:19px;color:#444;font-weight:700;letter-spacing:0.265px;left:371.00px;">0 Ft</div>
<div class="a" style="left:416.1px;top:557px;width:155.60px;height:33.40px;background:#efefef;border-radius:0 0 4px 4px;"></div>
<div class="a t" style="top:564.88px;font-size:14.75px;line-height:18px;color:#444;letter-spacing:-0.148px;left:426.40px;">Company Payer</div>
<div class="a t" style="top:564.31px;font-size:14.97px;line-height:19px;color:#444;font-weight:700;letter-spacing:0.282px;left:534.80px;">0 Ft</div>
<div class="a" style="left:579.8px;top:557px;width:114.90px;height:33.40px;background:#efefef;border-radius:0 0 4px 4px;"></div>
<div class="a t" style="top:564.95px;font-size:14.56px;line-height:18px;color:#444;letter-spacing:-0.275px;left:590.50px;">Packages</div>
<div class="a t" style="top:564.31px;font-size:14.97px;line-height:19px;color:#444;font-weight:700;letter-spacing:0.282px;left:656.90px;">0 Ft</div>
<div class="a t" style="top:598.10px;font-size:15.56px;line-height:19px;color:#a0a0a0;letter-spacing:0.242px;left:19.60px;">Credit limit</div>
<div class="a" style="left:18.8px;top:619.9px;width:222.80px;height:32.10px;background:#fff;border:1px solid #cfcfcf;"></div>
<div class="a t" style="top:624.94px;font-size:17.47px;line-height:22px;color:#666;letter-spacing:0.222px;left:23.90px;">No limit</div>
<svg class="a" style="left:227.5px;top:634px;" width="8" height="5" viewBox="0 0 8 5"><path d="M0 0.5 H8 L4 4.5 Z" fill="#666"/></svg>
<div class="a t" style="top:598.28px;font-size:15.05px;line-height:19px;color:#a0a0a0;letter-spacing:0.028px;left:250.00px;">Currency exchange date</div>
<div class="a" style="left:250px;top:619.6px;width:145.70px;height:32.40px;background:#fff;border:1px solid #bdbdbd;"></div>
<div class="a" style="left:357px;top:621px;width:1.00px;height:29.40px;background:#e3e3e3;"></div>
<div class="a" style="left:376px;top:621px;width:1.00px;height:29.40px;background:#e3e3e3;"></div>
<div class="a t" style="top:626.78px;font-size:16.21px;line-height:20px;color:#333;letter-spacing:0.103px;left:256.40px;">2022. 12. 05.</div>
<svg class="a" style="left:362px;top:631px;" width="11" height="11" viewBox="0 0 11 11"><path d="M1 1 L10 10 M10 1 L1 10" stroke="#444" stroke-width="1.6"/></svg>
<svg class="a" style="left:382.5px;top:634px;" width="7" height="5" viewBox="0 0 7 5"><path d="M0 0.5 H7 L3.5 4.5 Z" fill="#555"/></svg>
<div class="a t" style="top:598.47px;font-size:15.08px;line-height:19px;color:#a0a0a0;letter-spacing:0.042px;left:595.60px;">Current balance</div>
<div class="a t" style="top:623.85px;font-size:21.20px;line-height:26px;color:#1a1a1a;letter-spacing:0.113px;left:597.80px;">0 Ft</div>
<div class="a t" style="top:626.44px;font-size:18.05px;line-height:23px;color:#559a6c;letter-spacing:0.024px;left:641.70px;">-90,82 €</div>
<div class="a t" style="top:598.45px;font-size:15.13px;line-height:19px;color:#a0a0a0;letter-spacing:0.064px;left:820.30px;">Postings forecast</div>
<div class="a t" style="top:623.34px;font-size:21.22px;line-height:27px;color:#1a1a1a;letter-spacing:0.129px;left:872.60px;">0 Ft</div>
<div class="a t" style="top:626.99px;font-size:17.92px;line-height:22px;color:#559a6c;letter-spacing:-0.055px;left:916.80px;">0 €</div>
<div class="a t" style="top:598.41px;font-size:15.24px;line-height:19px;color:#a0a0a0;letter-spacing:0.115px;left:1132.00px;">Total:</div>
<div class="a t" style="top:623.88px;font-size:21.11px;line-height:26px;color:#1a1a1a;letter-spacing:0.062px;left:1061.70px;">0 Ft</div>
<div class="a t" style="top:626.44px;font-size:18.05px;line-height:23px;color:#559a6c;letter-spacing:0.024px;left:1105.90px;">-90,82 €</div>
</body></html>
